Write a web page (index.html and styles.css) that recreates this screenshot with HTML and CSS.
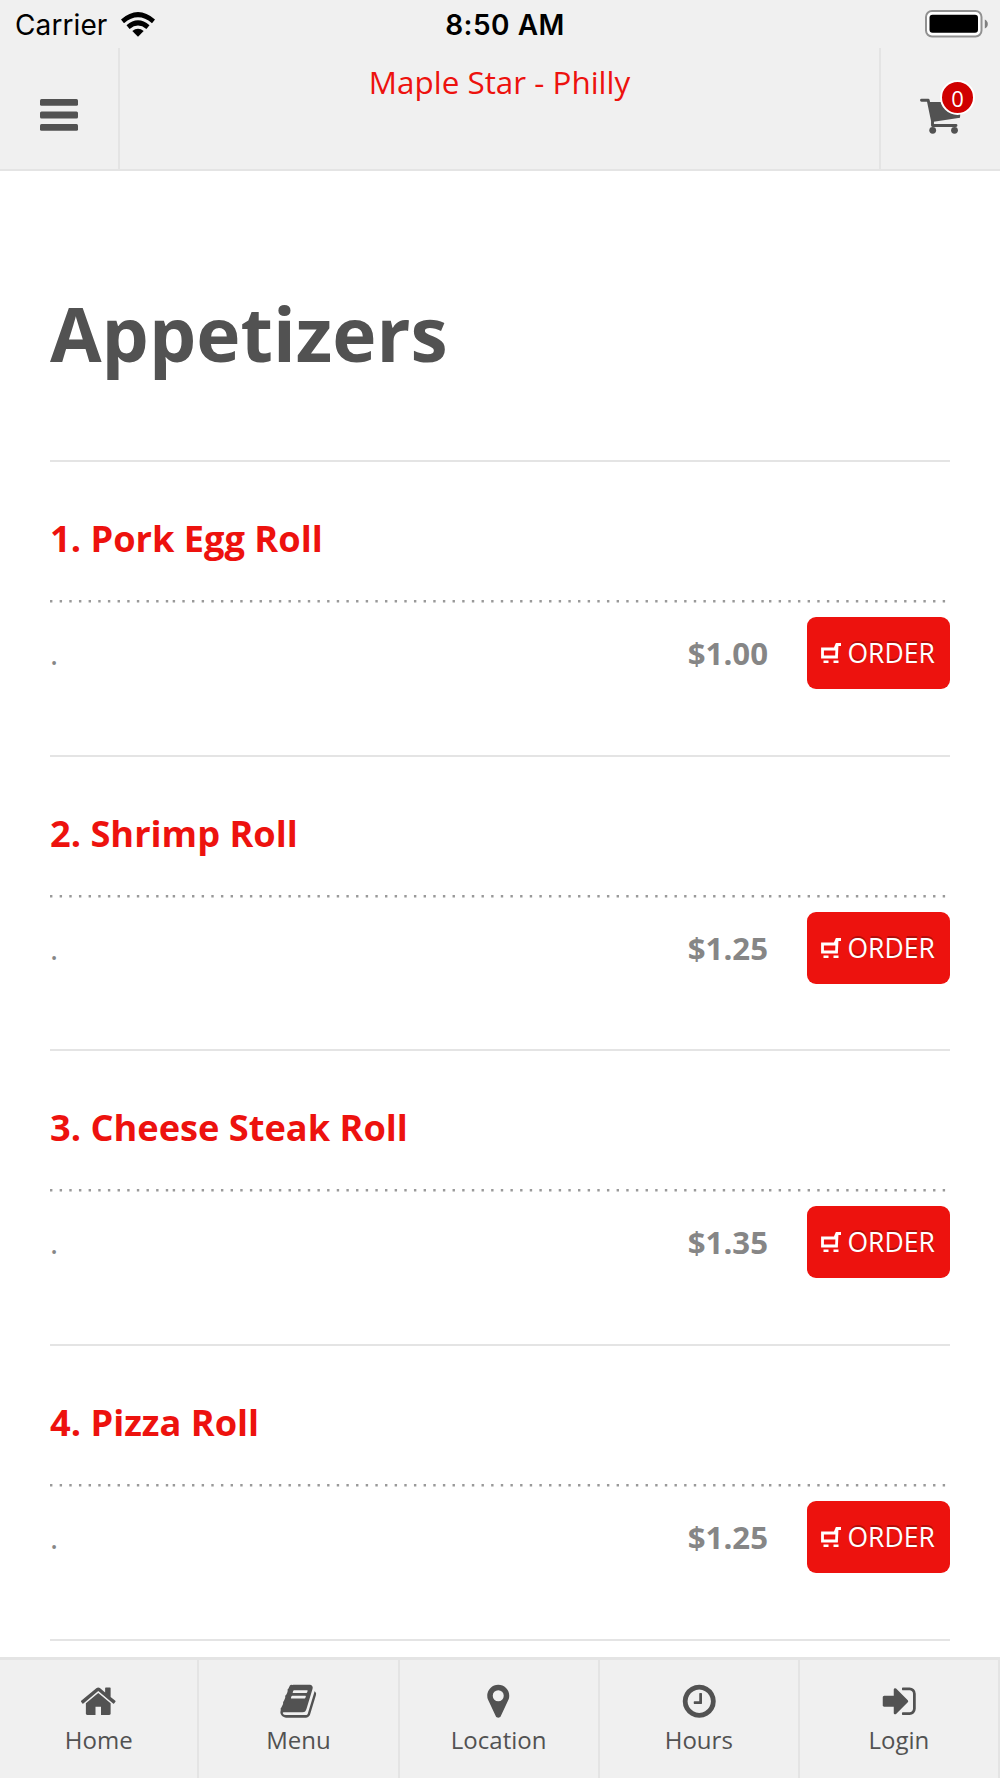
FILE: index.html
```
<!DOCTYPE html>
<html lang="en">

<head>
    <meta charset="UTF-8">
    <meta name="viewport" content="width=device-width, initial-scale=1.0">
    <title>Maple Star - Philly</title>
    <link rel="stylesheet" href="styles.css">
</head>

<body>
    <svg class="defs">
        <symbol id="dots" viewBox="0 0 900 3">
            <path d="M0 1.200H120" />
            <path d="M122.700 1.200H715" />
            <path d="M719 1.200H898" />
        </symbol>
        <symbol id="order-cart" viewBox="0 0 20 20">
            <path d="M20 1.500h-4.200l-2 4.500H1.500v8h14L16 3" fill="none" stroke="#fff" stroke-width="2.800" />
            <path d="M2.500 17.500h5v2.500h-5zM12.500 17.500h5v2.500h-5z" fill="#fff" />
        </symbol>
    </svg>

    <div class="status-bar">
        <div class="carrier">
            <span>Carrier</span>
            <svg class="wifi" viewBox="0 0 34 25">
                <path d="M0 7.500Q17 -7.500 34 7.500L31 11.200Q17 -0.500 3 11.200Z" />
                <path d="M5.500 13.300Q17 3.200 28.500 13.300L25.400 17Q17 10.200 8.600 17Z" />
                <path d="M11.300 19Q17 14.300 22.700 19L17 24.700Z" />
            </svg>
        </div>
        <div class="time">8:50 AM</div>
        <svg class="battery" viewBox="0 0 63 28">
            <rect x="1" y="1" width="55.500" height="25.500" rx="6" fill="#fff" stroke="#919191" stroke-width="2" />
            <rect x="4.500" y="4.800" width="48.500" height="18" rx="3" />
            <path d="M59.800 9.500q3 1.500 3 4.500t-3 4.500z" fill="#7f7f7f" />
        </svg>
    </div>

    <div class="header">
        <div class="menu-btn">
            <svg class="bars" viewBox="0 0 38 32">
                <rect width="38" height="6.800" rx="1.500" />
                <rect y="12.600" width="38" height="6.800" rx="1.500" />
                <rect y="25" width="38" height="6.800" rx="1.500" />
            </svg>
        </div>
        <div class="title">Maple Star - Philly</div>
        <div class="cart-btn">
            <svg class="cart" viewBox="0 0 42 36">
                <path d="M1.500 2.200H8.200L12.500 23V27.500H36" fill="none" stroke="#525252" stroke-width="2.900" stroke-linecap="round" stroke-linejoin="round" />
                <path d="M8 4H41L40 19.800L12 24Z" />
                <circle cx="12.700" cy="32.300" r="3.400" />
                <circle cx="34.500" cy="32.300" r="3.400" />
            </svg>
            <span class="badge">0</span>
        </div>
    </div>

    <div class="content">
        <h1>Appetizers</h1>

        <div class="item">
            <h2>1. Pork Egg Roll</h2>
            <svg class="dots"><use href="#dots" /></svg>
            <div class="row">
                <span class="desc">.</span>
                <span class="price">$1.00</span>
                <button class="order"><svg><use href="#order-cart" /></svg>ORDER</button>
            </div>
        </div>

        <div class="item">
            <h2>2. Shrimp Roll</h2>
            <svg class="dots"><use href="#dots" /></svg>
            <div class="row">
                <span class="desc">.</span>
                <span class="price">$1.25</span>
                <button class="order"><svg><use href="#order-cart" /></svg>ORDER</button>
            </div>
        </div>

        <div class="item">
            <h2>3. Cheese Steak Roll</h2>
            <svg class="dots"><use href="#dots" /></svg>
            <div class="row">
                <span class="desc">.</span>
                <span class="price">$1.35</span>
                <button class="order"><svg><use href="#order-cart" /></svg>ORDER</button>
            </div>
        </div>

        <div class="item">
            <h2>4. Pizza Roll</h2>
            <svg class="dots"><use href="#dots" /></svg>
            <div class="row">
                <span class="desc">.</span>
                <span class="price">$1.25</span>
                <button class="order"><svg><use href="#order-cart" /></svg>ORDER</button>
            </div>
        </div>

        <div class="item"></div>
    </div>

    <div class="nav">
        <a class="tab">
            <svg viewBox="0 0 1792 1792"><path d="M1472 992v480q0 26-19 45t-45 19h-384v-384h-256v384h-384q-26 0-45-19t-19-45v-480q0-1 .5-3t.5-3l575-474 575 474q1 2 1 6zm223-69l-62 74q-8 9-21 11h-3q-13 0-21-7l-692-577-692 577q-12 8-24 7-13-2-21-11l-62-74q-8-10-7-23.5t11-21.5l719-599q32-26 76-26t76 26l244 204v-195q0-14 9-23t23-9h192q14 0 23 9t9 23v408l219 182q10 8 11 21.5t-7 23.5z" /></svg>
            <span>Home</span>
        </a>
        <a class="tab">
            <svg viewBox="0 0 1792 1792"><path d="M1703 478q40 57 18 129l-275 906q-19 64-76.5 107.5t-122.5 43.5h-923q-77 0-148.5-53.5t-99.5-131.5q-24-67-2-127 0-4 3-27t4-37q1-8-3-21.5t-3-19.5q2-11 8-21t16.5-23.5 16.5-23.5q23-38 45-91.5t30-91.5q3-10 .5-30t-.5-28q3-11 17-28t17-23q21-36 42-92t25-90q1-9-2.5-32t.5-28q4-13 22-30.5t22-22.5q19-26 42.5-84.5t27.5-96.5q1-8-3-25.5t-2-26.5q2-8 9-18t18-23 17-21q8-12 16.5-30.5t15-35 16-36 19.5-32 26.5-23.5 36-11.5 47.5 5.5l-1 3q38-9 51-9h761q74 0 114 56t18 130l-274 906q-36 119-71.5 153.5t-128.5 34.5h-869q-27 0-38 15-11 16-1 43 24 70 144 70h923q29 0 56-15.5t35-41.5l300-987q7-22 5-57 38 15 59 43zm-1064 2q-4 13 2 22.5t20 9.5h608q13 0 25.5-9.5t16.5-22.5l21-64q4-13-2-22.5t-20-9.5h-608q-13 0-25.5 9.5t-16.5 22.5zm-83 256q-4 13 2 22.5t20 9.5h608q13 0 25.5-9.5t16.5-22.5l21-64q4-13-2-22.5t-20-9.5h-608q-13 0-25.5 9.5t-16.5 22.5z" /></svg>
            <span>Menu</span>
        </a>
        <a class="tab">
            <svg viewBox="0 0 1792 1792"><path d="M1152 640q0-106-75-181t-181-75-181 75-75 181 75 181 181 75 181-75 75-181zm256 0q0 109-33 179l-364 774q-16 33-47.5 52t-67.5 19-67.5-19-46.5-52l-365-774q-33-70-33-179 0-212 150-362t362-150 362 150 150 362z" /></svg>
            <span>Location</span>
        </a>
        <a class="tab">
            <svg viewBox="0 0 1792 1792"><path d="M1024 544v448q0 14-9 23t-23 9h-320q-14 0-23-9t-9-23v-64q0-14 9-23t23-9h224v-352q0-14 9-23t23-9h64q14 0 23 9t9 23zm416 352q0-148-73-273t-198-198-273-73-273 73-198 198-73 273 73 273 198 198 273 73 273-73 198-198 73-273zm224 0q0 209-103 385.5t-279.5 279.5-385.5 103-385.5-103-279.5-279.5-103-385.5 103-385.5 279.5-279.5 385.5-103 385.5 103 279.5 279.5 103 385.5z" /></svg>
            <span>Hours</span>
        </a>
        <a class="tab">
            <svg viewBox="0 0 1792 1792"><path d="M1312 896q0 26-19 45l-544 544q-19 19-45 19t-45-19-19-45v-288h-448q-26 0-45-19t-19-45v-384q0-26 19-45t45-19h448v-288q0-26 19-45t45-19 45 19l544 544q19 19 19 45zm352-352v704q0 119-84.5 203.5t-203.5 84.5h-320q-13 0-22.5-9.5t-9.5-22.5q0-4-1-20t-.5-26.5 3-23.5 10-19.5 20.5-6.5h320q66 0 113-47t47-113v-704q0-66-47-113t-113-47h-312l-11.5-1-11.5-3-8-5.5-7-9-2-13.5q0-4-1-20t-.5-26.5 3-23.5 10-19.5 20.5-6.5h320q119 0 203.5 84.5t84.5 203.5z" /></svg>
            <span>Login</span>
        </a>
    </div>
</body>

</html>
```
FILE: styles.css
```
* {
    box-sizing: border-box;
}

body {
    font-family: "Open Sans", sans-serif;
    background: #fff;
    color: #525252;
    margin: 0;
    height: 1778px;
    overflow: hidden;
    display: flex;
    flex-direction: column;
}

svg {
    display: block;
    flex: none;
}

.defs {
    position: absolute;
    width: 0;
    height: 0;
}

.status-bar {
    height: 48px;
    flex: none;
    padding: 0 12px 0 15px;
    background: #f0f0f0;
    color: #000;
    font-family: Inter, sans-serif;
    font-size: 28px;
    line-height: 51px;
    display: grid;
    grid-template-columns: 1fr auto 1fr;
}

.carrier {
    display: flex;
    gap: 14px;
    letter-spacing: 0.1px;
}

.wifi {
    width: 34px;
    height: 25px;
    margin-top: 12px;
}

.time {
    font-weight: 600;
    font-size: 28px;
    letter-spacing: 0.5px;
    padding-left: 7px;
}

.battery {
    width: 63px;
    height: 28px;
    margin-top: 10px;
    justify-self: end;
}

.header {
    height: 123px;
    flex: none;
    background: #f0f0f0;
    border-bottom: 2px solid #e4e4e4;
    display: flex;
}

.menu-btn {
    width: 120px;
    border-right: 2px solid #e4e4e4;
    padding: 51px 0 0 40px;
}

.bars {
    width: 38px;
    height: 32px;
    fill: #525252;
}

.title {
    flex: 1;
    color: #ed120e;
    font-size: 31.4px;
    line-height: 42px;
    padding-top: 13px;
    text-align: center;
}

.cart-btn {
    width: 121px;
    border-left: 2px solid #e4e4e4;
    padding: 50px 0 0 39px;
    position: relative;
}

.cart {
    width: 42px;
    height: 36px;
    fill: #525252;
}

.badge {
    position: absolute;
    top: 32px;
    left: 59px;
    width: 35px;
    height: 35px;
    border: 2px solid #fff;
    border-radius: 50%;
    background: #d00000;
    color: #fff;
    font-size: 22px;
    line-height: 32px;
    text-align: center;
}

.content {
    flex: 1;
    padding: 0 50px;
    min-height: 0;
    overflow: hidden;
}

h1 {
    margin: 0;
    height: 289px;
    padding-top: 111px;
    font-size: 74.8px;
    line-height: 102px;
}

.item {
    height: 294.7px;
    border-top: 2px solid #e4e4e4;
}

h2 {
    margin: 0;
    height: 138px;
    padding-top: 52px;
    color: #ed120e;
    font-size: 36.2px;
    line-height: 49px;
}

.dots {
    width: 900px;
    height: 3px;
    fill: none;
    stroke: #999;
    stroke-width: 2.4;
    stroke-dasharray: 2.4 7.25;
}

.row {
    display: flex;
    align-items: center;
    margin-top: 14px;
    height: 72px;
    color: #868686;
}

.desc {
    flex: 1;
    font-size: 31px;
    line-height: 42px;
}

.price {
    font-size: 31.2px;
    font-weight: bold;
    margin-right: 39px;
}

.order {
    display: flex;
    align-items: center;
    gap: 6.5px;
    width: 143px;
    height: 72px;
    padding: 0 0 0 14px;
    border: none;
    border-radius: 9px;
    background: #ed120e;
    color: #fff;
    font-family: inherit;
    font-size: 26.5px;
    text-shadow: 0 -2px 0 rgba(0, 0, 0, 0.25);
}

.order svg {
    width: 20px;
    height: 20px;
}

.nav {
    height: 121px;
    flex: none;
    background: #f0f0f0;
    border-top: 3px solid #e4e4e4;
    display: flex;
}

.tab {
    flex: 1;
    border-right: 2px solid #e4e4e4;
    padding-top: 22px;
    display: flex;
    flex-direction: column;
    align-items: center;
    font-size: 24px;
    line-height: 32px;
}

.tab:first-child {
    flex: none;
    width: 199.4px;
}

.tab svg {
    width: 38.5px;
    height: 38.5px;
    fill: #525252;
    margin-bottom: 3px;
}
```
